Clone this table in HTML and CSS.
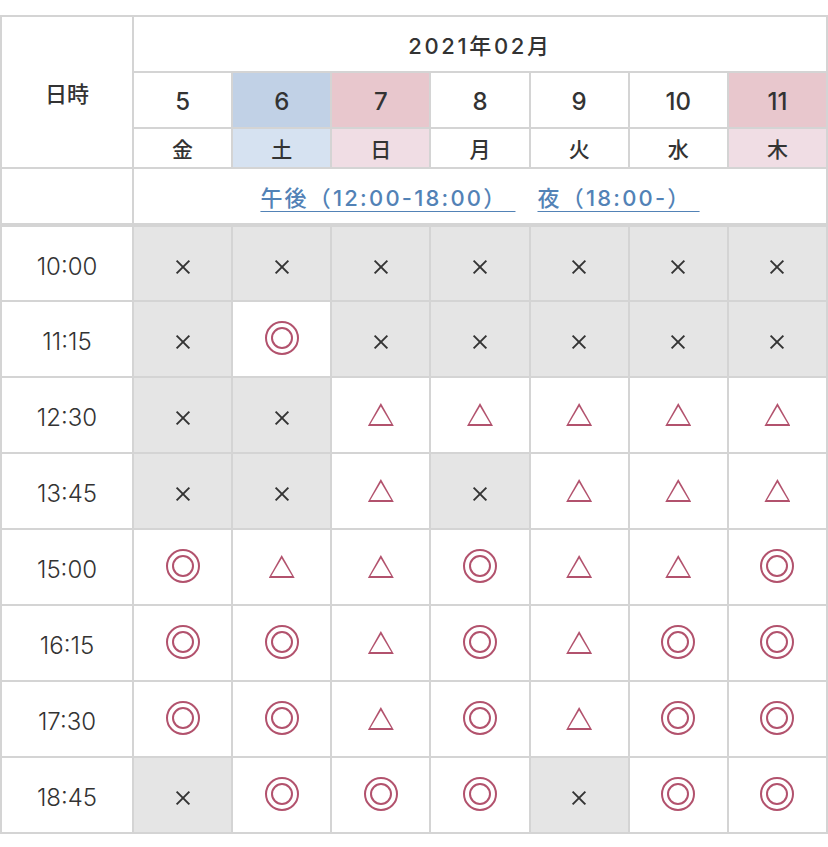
FILE: index.html
```html
<!DOCTYPE html>
<html lang="ja">
<head>
<meta charset="utf-8">
<link rel="stylesheet" href="styles.css">
</head>
<body>
<table class="cal">
  <thead>
    <tr class="r-month">
      <th class="corner" rowspan="3">日時</th>
      <th class="month" colspan="7">2021年02月</th>
    </tr>
    <tr class="r-date">
      <th>5</th><th class="sat">6</th><th class="sun">7</th><th>8</th><th>9</th><th>10</th><th class="sun">11</th>
    </tr>
    <tr class="r-wd">
      <th>金</th><th class="sat">土</th><th class="sun">日</th><th>月</th><th>火</th><th>水</th><th class="sun">木</th>
    </tr>
    <tr class="r-link">
      <th></th>
      <td colspan="7" class="links"><a href="#">午後（12:00-18:00） </a><a href="#">夜（18:00-） </a></td>
    </tr>
  </thead>
  <tbody>
    <tr><th class="time">10:00</th><td class="x"><i class="cross"></i></td><td class="x"><i class="cross"></i></td><td class="x"><i class="cross"></i></td><td class="x"><i class="cross"></i></td><td class="x"><i class="cross"></i></td><td class="x"><i class="cross"></i></td><td class="x"><i class="cross"></i></td></tr>
    <tr><th class="time">11:15</th><td class="x"><i class="cross"></i></td><td><i class="dbl"></i></td><td class="x"><i class="cross"></i></td><td class="x"><i class="cross"></i></td><td class="x"><i class="cross"></i></td><td class="x"><i class="cross"></i></td><td class="x"><i class="cross"></i></td></tr>
    <tr><th class="time">12:30</th><td class="x"><i class="cross"></i></td><td class="x"><i class="cross"></i></td><td><i class="tri"></i></td><td><i class="tri"></i></td><td><i class="tri"></i></td><td><i class="tri"></i></td><td><i class="tri"></i></td></tr>
    <tr><th class="time">13:45</th><td class="x"><i class="cross"></i></td><td class="x"><i class="cross"></i></td><td><i class="tri"></i></td><td class="x"><i class="cross"></i></td><td><i class="tri"></i></td><td><i class="tri"></i></td><td><i class="tri"></i></td></tr>
    <tr><th class="time">15:00</th><td><i class="dbl"></i></td><td><i class="tri"></i></td><td><i class="tri"></i></td><td><i class="dbl"></i></td><td><i class="tri"></i></td><td><i class="tri"></i></td><td><i class="dbl"></i></td></tr>
    <tr><th class="time">16:15</th><td><i class="dbl"></i></td><td><i class="dbl"></i></td><td><i class="tri"></i></td><td><i class="dbl"></i></td><td><i class="tri"></i></td><td><i class="dbl"></i></td><td><i class="dbl"></i></td></tr>
    <tr><th class="time">17:30</th><td><i class="dbl"></i></td><td><i class="dbl"></i></td><td><i class="tri"></i></td><td><i class="dbl"></i></td><td><i class="tri"></i></td><td><i class="dbl"></i></td><td><i class="dbl"></i></td></tr>
    <tr><th class="time">18:45</th><td class="x"><i class="cross"></i></td><td><i class="dbl"></i></td><td><i class="dbl"></i></td><td><i class="dbl"></i></td><td class="x"><i class="cross"></i></td><td><i class="dbl"></i></td><td><i class="dbl"></i></td></tr>
  </tbody>
</table>
</body>
</html>
```

FILE: styles.css
```css
html, body {
  margin: 0;
  padding: 0;
  background: #fff;
}
body {
  padding-top: 15px;
  font-family: Inter, "Noto Sans CJK JP", "Noto Sans", sans-serif;
  color: #333;
}
.cal {
  width: 828px;
  border-collapse: collapse;
  table-layout: fixed;
}
.cal th, .cal td {
  border: 2px solid #d4d4d4;
  padding: 0;
  text-align: center;
  vertical-align: middle;
}
.corner {
  width: 130px;
  font-size: 22px;
  font-weight: 500;
}
.month {
  font-size: 22px;
  font-weight: 500;
  letter-spacing: 0.12em;
}
.r-month { height: 56px; }
.r-date { height: 56px; }
.r-date th {
  font-size: 24px;
  font-weight: 500;
  padding-top: 2px;
}
.r-wd { height: 40px; }
.r-wd th {
  font-size: 21px;
  font-weight: 500;
}
.r-date .sat { background: #c1d1e6; }
.r-date .sun { background: #e8c7cd; }
.r-wd .sat { background: #d6e2f1; }
.r-wd .sun { background: #f0dde4; }
.r-link { height: 57px; }
.r-link th, .r-link td { border-bottom-width: 4px; }
.links a {
  color: #5282b6;
  font-size: 22px;
  font-weight: 500;
  letter-spacing: 0.1em;
  text-decoration: underline;
  text-underline-offset: 5px;
  text-decoration-thickness: 1px;
  margin: 0 11px;
  white-space: pre;
}
tbody tr { height: 76px; }
.cal .time {
  font-size: 24px;
  font-weight: 300;
  color: #333;
  padding-top: 5px;
}
tbody td.x { background: #e5e5e5; }
.cross, .dbl, .tri {
  display: inline-block;
  vertical-align: middle;
  position: relative;
}
.cross {
  width: 16px;
  height: 16px;
  margin-top: 6px;
}
.cross::before, .cross::after {
  content: "";
  position: absolute;
  left: -1px;
  top: 7px;
  width: 18px;
  height: 2px;
  background: #333;
  transform: rotate(45deg);
}
.cross::after { transform: rotate(-45deg); }
.dbl {
  width: 30px;
  height: 30px;
  border: 2px solid #b2526d;
  border-radius: 50%;
  margin-top: -2px;
}
.dbl::after {
  content: "";
  position: absolute;
  left: 4px;
  top: 4px;
  width: 18px;
  height: 18px;
  border: 2px solid #b2526d;
  border-radius: 50%;
}
.tri {
  width: 26px;
  height: 23px;
  margin-top: -2px;
  background: #b2526d;
  clip-path: polygon(50% 0, 100% 100%, 0 100%);
}
.tri::after {
  content: "";
  position: absolute;
  left: 2.3px;
  top: 3.4px;
  width: 21.4px;
  height: 18px;
  background: #fff;
  clip-path: polygon(50% 0, 100% 100%, 0 100%);
}
```
